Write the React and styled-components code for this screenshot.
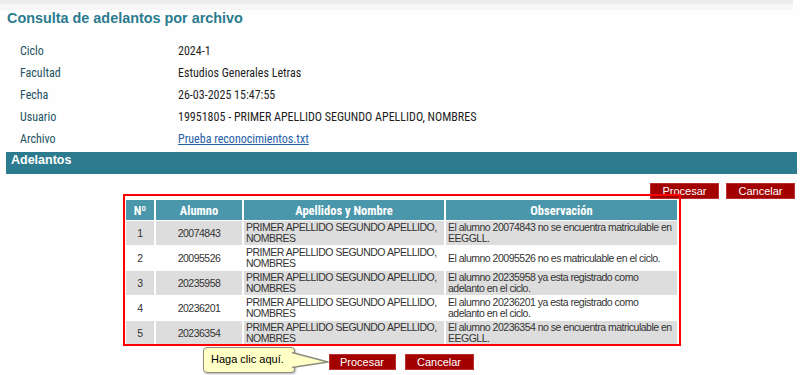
import React from "react";
import styled, { createGlobalStyle } from "styled-components";

const Global = createGlobalStyle`
  html, body { margin: 0; padding: 0; background: #fefefe; }
  body { font-family: "Liberation Sans", Arial, sans-serif; }
`;

const Page = styled.div`
  width: 800px;
  height: 375px;
  overflow: hidden;
  position: relative;
  background: #fefefe;
`;

const TopStrip = styled.div`
  height: 4px;
  background: #ececec;
  border-bottom: 6px solid #f6f6f6;
  margin-right: 7px;
`;

const Title = styled.h1`
  margin: 0;
  padding: 0 0 0 7px;
  height: 21px;
  font: bold 14.4px/17px "Liberation Sans", Arial, sans-serif;
  color: #2b7b8e;
`;

const Info = styled.div`
  display: grid;
  grid-template-columns: 158px 1fr;
  grid-auto-rows: 22px;
  padding: 9px 0 0 20px;
  align-items: center;
`;

const Label = styled.div`
  font-family: Roboto, "Liberation Sans", sans-serif;
  font-stretch: condensed;
  font-size: 12px;
  color: #1d5262;
`;

const Value = styled.div`
  font-family: Roboto, "Liberation Sans", sans-serif;
  font-stretch: condensed;
  font-size: 12px;
  color: #1e1e1e;
`;

const FileLink = styled.a`
  color: #2460a8;
  text-decoration: underline;
`;

const SectionBar = styled.div`
  margin: 2px 3px 0 6px;
  height: 22px;
  background: #2c7b8f;
  color: #fff;
  font: bold 12.5px/14px "Liberation Sans", Arial, sans-serif;
  padding: 1px 0 0 5px;
  box-sizing: border-box;
`;

const ButtonRow = styled.div`
  display: flex;
  gap: ${(p) => p.$gap}px;
  justify-content: ${(p) => (p.$center ? "center" : "flex-end")};
  padding: ${(p) => p.$pad};
`;

const Button = styled.button`
  height: 16px;
  width: ${(p) => p.$w}px;
  padding: 0;
  border: 1px solid #b83030;
  background: #a30000;
  color: #fff;
  font: 11px/14px "Liberation Sans", Arial, sans-serif;
  cursor: pointer;
`;

const TableArea = styled.div`
  position: relative;
  display: flex;
  justify-content: center;
  padding: 0 0 0 3px;
`;

const Highlight = styled.div`
  position: absolute;
  left: 123px;
  top: -5px;
  width: 554px;
  height: 148px;
  border: 2px solid #ff0000;
  pointer-events: none;
  z-index: 2;
`;

const Table = styled.table`
  border-collapse: separate;
  border-spacing: 2px 1px;
  width: 555px;
  table-layout: fixed;
  font: 10.5px "Liberation Sans", Arial, sans-serif;
  letter-spacing: -0.5px;
  color: #333;
`;

const Th = styled.th`
  background: #4a96aa;
  color: #fff;
  height: 20px;
  padding: 0;
  font-family: Roboto, "Liberation Sans", sans-serif;
  font-stretch: condensed;
  font-weight: bold;
  font-size: 12.5px;
  letter-spacing: 0;
  text-align: center;
`;

const Row = styled.tr`
  background: ${(p) => (p.$alt ? "#dddddd" : "#ffffff")};
`;

const Td = styled.td`
  height: 24px;
  padding: 0 2px;
  line-height: 11px;
  vertical-align: middle;
  white-space: pre-line;
  text-align: ${(p) => (p.$center ? "center" : "left")};
`;

const Tooltip = styled.div`
  position: absolute;
  left: 203px;
  top: 347px;
  width: 92px;
  height: 26px;
  box-sizing: border-box;
  background: #ffffc6;
  border: 1.5px solid #8c8c7c;
  border-radius: 4px;
  box-shadow: 1px 1px 2px rgba(0, 0, 0, 0.3);
  font: 11px "Liberation Sans", Arial, sans-serif;
  color: #000;
  padding: 5px 0 0 7px;
  z-index: 3;
`;

const Arrow = styled.svg`
  position: absolute;
  left: 88px;
  top: 3px;
  overflow: visible;
`;

const rows = [
  ["1", "20074843", "El alumno 20074843 no se encuentra matriculable en\nEEGGLL."],
  ["2", "20095526", "El alumno 20095526 no es matriculable en el ciclo."],
  ["3", "20235958", "El alumno 20235958 ya esta registrado como\nadelanto en el ciclo."],
  ["4", "20236201", "El alumno 20236201 ya esta registrado como\nadelanto en el ciclo."],
  ["5", "20236354", "El alumno 20236354 no se encuentra matriculable en\nEEGGLL."],
];

const info = [
  ["Ciclo", "2024-1"],
  ["Facultad", "Estudios Generales Letras"],
  ["Fecha", "26-03-2025 15:47:55"],
  ["Usuario", "19951805 - PRIMER APELLIDO SEGUNDO APELLIDO, NOMBRES"],
];

export default function App() {
  return (
    <>
      <Global />
      <Page>
        <TopStrip />
        <Title>Consulta de adelantos por archivo</Title>
        <Info>
          {info.map(([l, v]) => (
            <React.Fragment key={l}>
              <Label>{l}</Label>
              <Value>{v}</Value>
            </React.Fragment>
          ))}
          <Label>Archivo</Label>
          <Value>
            <FileLink href="#">Prueba reconocimientos.txt</FileLink>
          </Value>
        </Info>
        <SectionBar>Adelantos</SectionBar>
        <ButtonRow $gap={7} $pad="9px 5px 0 0">
          <Button $w={69}>Procesar</Button>
          <Button $w={69}>Cancelar</Button>
        </ButtonRow>
        <TableArea>
          <Highlight />
          <Table>
            <colgroup>
              <col style={{ width: 28 }} />
              <col style={{ width: 86 }} />
              <col style={{ width: 200 }} />
              <col style={{ width: 231 }} />
            </colgroup>
            <thead>
              <tr>
                <Th>Nº</Th>
                <Th>Alumno</Th>
                <Th>Apellidos y Nombre</Th>
                <Th>Observación</Th>
              </tr>
            </thead>
            <tbody>
              {rows.map(([n, a, o], i) => (
                <Row key={n} $alt={i % 2 === 0}>
                  <Td $center>{n}</Td>
                  <Td $center>{a}</Td>
                  <Td>{"PRIMER APELLIDO SEGUNDO APELLIDO,\nNOMBRES"}</Td>
                  <Td>{o}</Td>
                </Row>
              ))}
            </tbody>
          </Table>
        </TableArea>
        <ButtonRow $center $gap={9} $pad="8px 0 0 2px">
          <Button $w={67}>Procesar</Button>
          <Button $w={69}>Cancelar</Button>
        </ButtonRow>
        <Tooltip>
          Haga clic aquí.
          <Arrow width="36" height="18" viewBox="0 0 36 18">
            <path d="M0 1.5 L36 11 L0 16.5" fill="#ffffc6" stroke="#8c8c7c" strokeWidth="1.5" strokeLinejoin="round" />
          </Arrow>
        </Tooltip>
      </Page>
    </>
  );
}
